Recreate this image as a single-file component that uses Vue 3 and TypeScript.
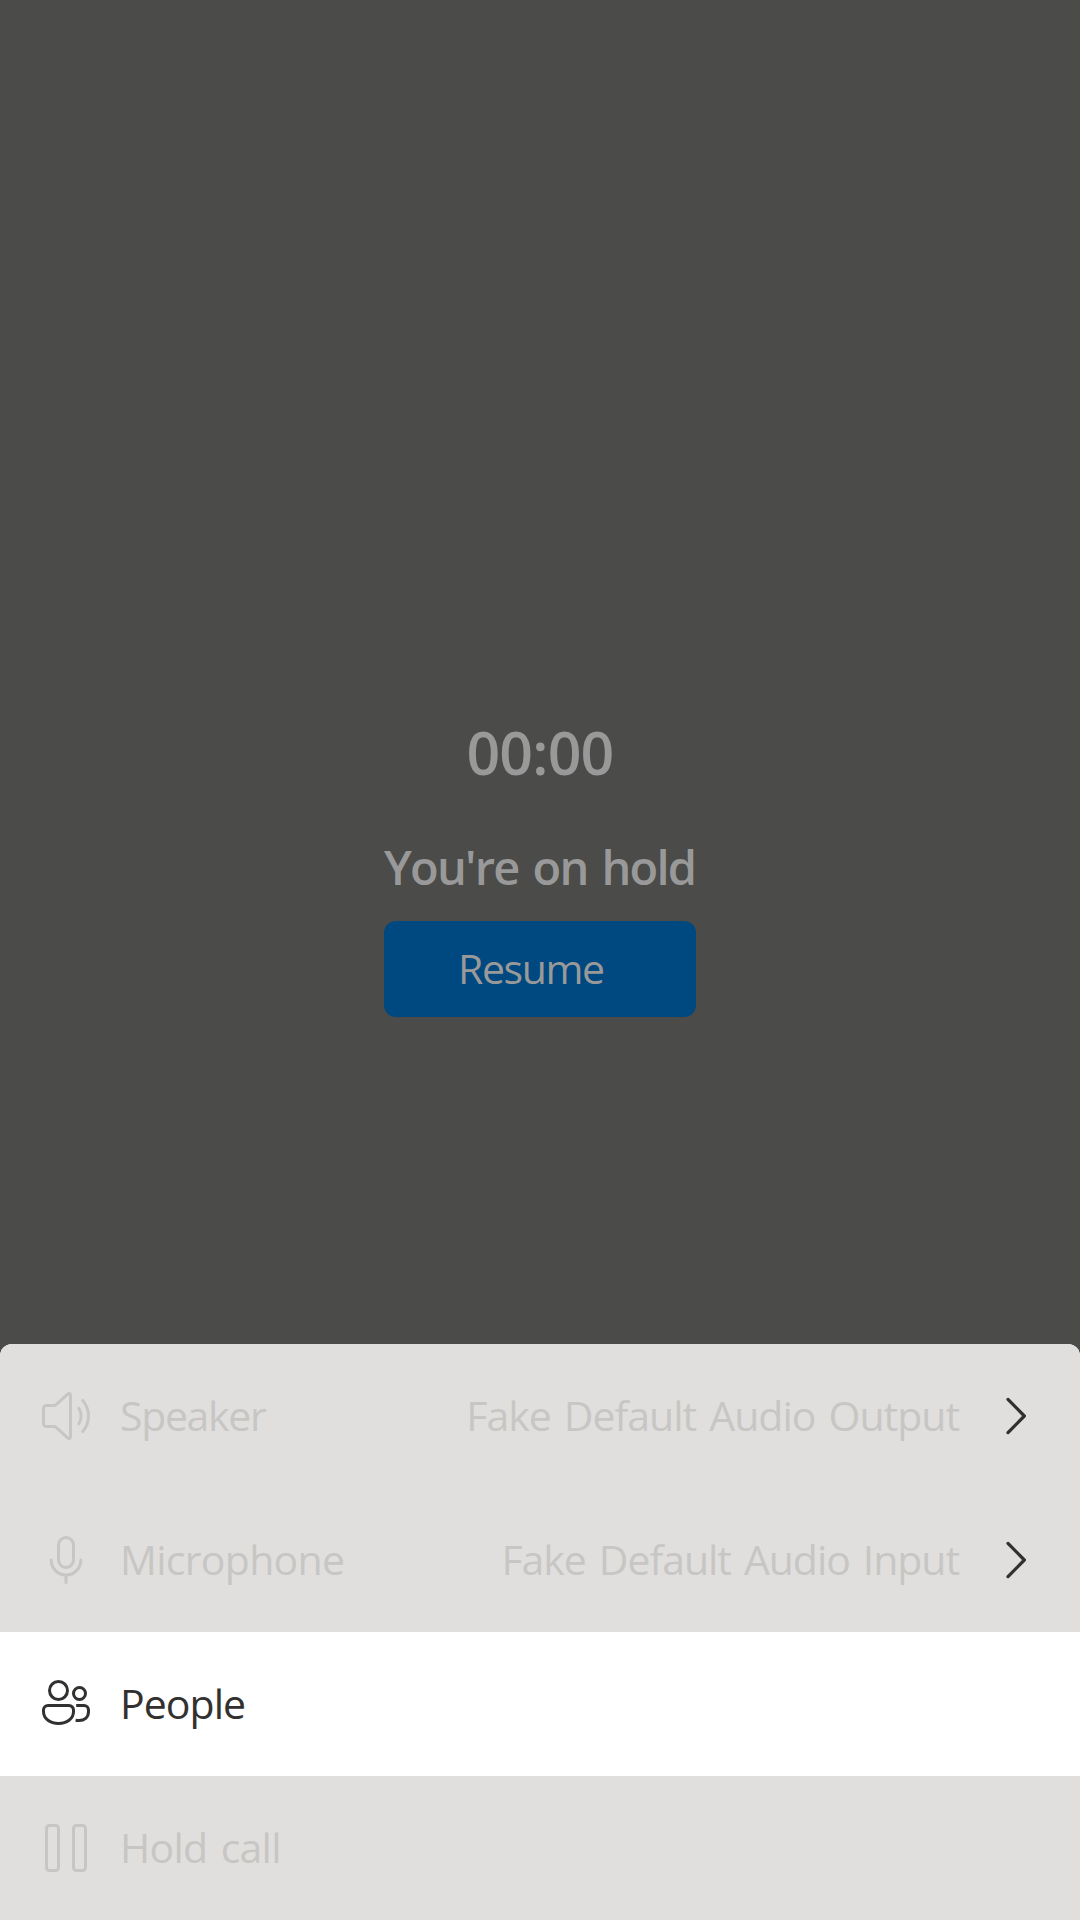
<script setup lang="ts">
interface MenuItem {
  id: 'speaker' | 'microphone' | 'people' | 'hold'
  label: string
  spacing: number
  value?: string
  valueSpacing?: number
  disabled: boolean
}

const items: MenuItem[] = [
  { id: 'speaker', label: 'Speaker', spacing: -1.33, value: 'Fake Default Audio Output', valueSpacing: -1, disabled: true },
  { id: 'microphone', label: 'Microphone', spacing: -0.7, value: 'Fake Default Audio Input', valueSpacing: -1.05, disabled: true },
  { id: 'people', label: 'People', spacing: -0.95, disabled: false },
  { id: 'hold', label: 'Hold call', spacing: -0.75, disabled: true },
]
</script>

<template>
  <div class="screen">
    <main class="hold">
      <div class="timer">00:00</div>
      <div class="status">You're on hold</div>
      <button class="resume" type="button">Resume</button>
    </main>

    <ul class="sheet">
      <li v-for="item in items" :key="item.id" class="item" :class="{ disabled: item.disabled }">
        <svg class="icon" viewBox="0 0 20 20">
          <g v-if="item.id === 'speaker'">
            <path d="M11.5 3.02v13.96c0 .43-.5.66-.83.37L6.6 13.7a.8.8 0 0 0-.53-.2H3.5a1 1 0 0 1-1-1v-5a1 1 0 0 1 1-1h2.57a.8.8 0 0 0 .53-.2l4.07-3.65c.33-.29.83-.06.83.37Z" />
            <path d="M15.55 4.8c2.6 3.1 2.6 7.3 0 10.4M14.3 7.4c.93 1.65.93 3.55 0 5.2" />
          </g>
          <g v-else-if="item.id === 'microphone'">
            <rect x="7.5" y="2.5" width="5" height="10" rx="2.5" />
            <path d="M5.05 10a4.95 5 0 0 0 9.9 0M10 15v2.5" />
          </g>
          <g v-else-if="item.id === 'people'" class="butt">
            <circle cx="7.5" cy="5.5" r="3" />
            <circle cx="14.5" cy="6.5" r="2" />
            <path d="M4 10.5h7a1.5 1.5 0 0 1 1.5 1.5v.5c0 2.5-2.3 4-5 4s-5-1.5-5-4V12A1.5 1.5 0 0 1 4 10.5Z" />
            <path d="M13.4 10.5H16a1.5 1.5 0 0 1 1.5 1.5v.5c0 2-1.4 3-3.2 3-.4 0-.75-.02-1.1-.08" />
          </g>
          <g v-else>
            <rect x="3.5" y="2.5" width="4" height="15" rx="1" />
            <rect x="12.5" y="2.5" width="4" height="15" rx="1" />
          </g>
        </svg>
        <span class="label" :style="{ letterSpacing: item.spacing + 'px' }">{{ item.label }}</span>
        <template v-if="item.value">
          <span class="value" :style="{ letterSpacing: item.valueSpacing + 'px' }">{{ item.value }}</span>
          <svg class="icon chevron" viewBox="0 0 20 20">
            <path d="M8 4.45 13.45 10 8 15.55" />
          </svg>
        </template>
      </li>
    </ul>
  </div>
</template>

<style>
body {
  background: #4b4b49;
}
</style>

<style scoped>
.screen {
  display: flex;
  flex-direction: column;
  width: 1080px;
  height: 1920px;
  overflow: hidden;
  background: #4b4b49;
  font-family: "Open Sans", "Noto Sans", sans-serif;
}

.hold {
  flex: 1;
  display: flex;
  flex-direction: column;
  align-items: center;
  padding-top: 712px;
  color: #999;
  font-weight: 600;
}

.timer {
  font-size: 59px;
  line-height: 80px;
  letter-spacing: -0.8px;
}

.status {
  width: 312px;
  margin-top: 43px;
  font-size: 47px;
  line-height: 64px;
  letter-spacing: -1.75px;
  word-spacing: 3.4px;
  white-space: nowrap;
}

.resume {
  width: 312px;
  height: 96px;
  margin-top: 22px;
  padding: 0 0 3px 74px;
  border: 0;
  border-radius: 12px;
  background: #004880;
  color: #999;
  font: 400 41px/60px "Open Sans", "Noto Sans", sans-serif;
  letter-spacing: -1.4px;
  text-align: left;
}

.sheet {
  margin: 0;
  padding: 0;
  list-style: none;
  border-radius: 12px 12px 0 0;
  overflow: hidden;
  background: #fff;
}

.item {
  display: flex;
  align-items: center;
  gap: 24px;
  height: 144px;
  padding: 0 36px;
  box-sizing: border-box;
  color: #323130;
  font-size: 41px;
  line-height: 58px;
  word-spacing: 3.4px;
  white-space: nowrap;
}

.item.disabled {
  background: #e0dfdd;
  color: #c8c6c4;
}

.label,
.value {
  padding-bottom: 2px;
}

.value {
  padding-right: 1px;
}

.label {
  flex: 1;
}

.icon {
  flex: none;
  width: 60px;
  height: 60px;
  fill: none;
  stroke: currentColor;
  stroke-width: 1;
  stroke-linecap: round;
  stroke-linejoin: round;
}

.butt {
  stroke-linecap: butt;
}

.chevron {
  color: #323130;
  stroke-width: 1.08;
}
</style>
